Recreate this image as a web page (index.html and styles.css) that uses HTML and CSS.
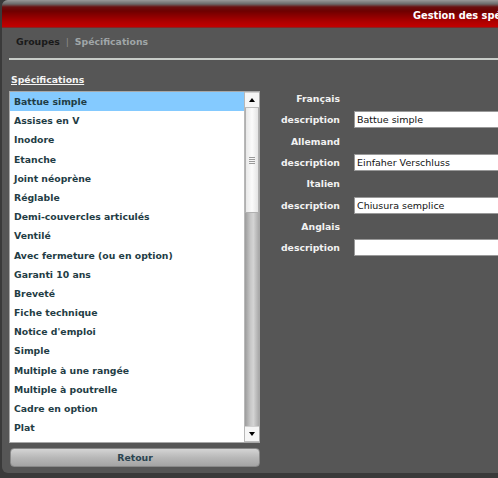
FILE: index.html
```html
<!DOCTYPE html>
<html lang="fr">
<head>
<meta charset="utf-8">
<title>Gestion des spécifications</title>
<link rel="stylesheet" href="styles.css">
</head>
<body>
<div class="window">
  <div class="titlebar"><span class="title">Gestion des spé</span></div>
  <div class="nav">
    <span class="nav-active">Groupes</span>
    <span class="nav-sep">|</span>
    <span class="nav-link">Spécifications</span>
  </div>
  <div class="rule"></div>
  <div class="content">
    <div class="left">
      <div class="section-title">Spécifications</div>
      <div class="listbox">
        <ul class="items">
          <li class="selected">Battue simple</li>
          <li>Assises en V</li>
          <li>Inodore</li>
          <li>Etanche</li>
          <li>Joint néoprène</li>
          <li>Réglable</li>
          <li>Demi-couvercles articulés</li>
          <li>Ventilé</li>
          <li>Avec fermeture (ou en option)</li>
          <li>Garanti 10 ans</li>
          <li>Breveté</li>
          <li>Fiche technique</li>
          <li>Notice d'emploi</li>
          <li>Simple</li>
          <li>Multiple à une rangée</li>
          <li>Multiple à poutrelle</li>
          <li>Cadre en option</li>
          <li>Plat</li>
        </ul>
        <div class="scrollbar">
          <div class="sb-btn"><span class="tri-up"></span></div>
          <div class="sb-thumb"><span class="grip"></span></div>
          <div class="sb-track"></div>
          <div class="sb-btn"><span class="tri-down"></span></div>
        </div>
      </div>
      <button class="btn">Retour</button>
    </div>
    <div class="form">
      <div class="lang">Français</div><div></div>
      <div class="lbl">description</div><input class="field" value="Battue simple">
      <div class="lang">Allemand</div><div></div>
      <div class="lbl">description</div><input class="field" value="Einfaher Verschluss">
      <div class="lang">Italien</div><div></div>
      <div class="lbl">description</div><input class="field" value="Chiusura semplice">
      <div class="lang">Anglais</div><div></div>
      <div class="lbl">description</div><input class="field" value="">
    </div>
  </div>
</div>
</body>
</html>
```

FILE: styles.css
```css
html, body {
  margin: 0;
  padding: 0;
  background: #3a3a3a;
  overflow: hidden;
}
body {
  width: 498px;
  height: 478px;
  font-family: "DejaVu Sans", Verdana, sans-serif;
  font-weight: bold;
  font-size: 9.3px;
}
.window {
  margin-left: 2px;
  height: 473px;
  background: #565656;
  border-radius: 6px 0 0 6px;
  overflow: hidden;
}
.titlebar {
  height: 28px;
  background: linear-gradient(to bottom, #9a9a9a 0px, #6a6a6a 4px, #6a1010 7px, #6e0000 11px, #b00000 22px, #c20000 27px, #4a4a4a 28px);
  display: flex;
  align-items: center;
  padding-left: 411px;
  white-space: nowrap;
  overflow: hidden;
}
.title {
  color: #fff;
  font-size: 9.8px;
  padding-top: 3px;
}
.nav {
  height: 26px;
  display: flex;
  align-items: center;
  padding-left: 14px;
  gap: 6px;
}
.nav-active { color: #1a1a1a; }
.nav-sep { color: #8c8c8c; font-weight: normal; }
.nav-link { color: #a0a6a8; }
.rule {
  margin: 4px 0 0 7px;
  height: 2px;
  background: #c8ccc8;
}
.content {
  display: flex;
  padding: 13px 0 0 7px;
}
.left {
  width: 251px;
  display: flex;
  flex-direction: column;
}
.section-title {
  color: #f4f4f4;
  text-decoration: underline;
  margin-left: 2px;
  height: 18px;
  line-height: 14px;
}
.listbox {
  height: 350px;
  background: #fff;
  border: 1px solid #a8a8a8;
  display: flex;
}
.items {
  list-style: none;
  margin: 0;
  padding: 0;
  flex: 1;
}
.items li {
  height: 19.2px;
  line-height: 19.2px;
  padding-left: 4px;
  color: #1f3d45;
  white-space: nowrap;
}
.items li.selected {
  background: #84caff;
}
.scrollbar {
  width: 14px;
  border-left: 1px solid #b8b8b8;
  display: flex;
  flex-direction: column;
}
.sb-btn {
  height: 14px;
  background: #f6f6f6;
  border-top: 1px solid #d0d0d0;
  border-bottom: 1px solid #bdbdbd;
  display: flex;
  align-items: center;
  justify-content: center;
}
.tri-up {
  width: 0; height: 0;
  border-left: 3px solid transparent;
  border-right: 3px solid transparent;
  border-bottom: 4px solid #000;
}
.tri-down {
  width: 0; height: 0;
  border-left: 3px solid transparent;
  border-right: 3px solid transparent;
  border-top: 4px solid #000;
}
.sb-thumb {
  height: 104px;
  background: linear-gradient(to right, #e8e8e8, #fbfbfb 50%, #e4e4e4);
  border-left: 1px solid #b0b0b0;
  border-right: 1px solid #b0b0b0;
  border-bottom: 1px solid #b0b0b0;
  display: flex;
  align-items: center;
  justify-content: center;
}
.grip {
  width: 6px;
  height: 7px;
  background: repeating-linear-gradient(to bottom, #9a9a9a 0 1px, transparent 1px 2px);
}
.sb-track {
  flex: 1;
  background: linear-gradient(to right, #9c9c9c, #c8c8c8 40%, #d4d4d4 60%, #a8a8a8);
}
.btn {
  margin-top: 5px;
  height: 19px;
  width: 250px;
  margin-left: 1px;
  border: 1px solid #888;
  border-radius: 4px;
  background: linear-gradient(to bottom, #d4d4d4, #b8b8b8 50%, #a4a4a4);
  color: #2a4450;
  font-family: "DejaVu Sans", Verdana, sans-serif;
  font-weight: bold;
  font-size: 9.3px;
  padding: 0;
}
.form {
  display: grid;
  grid-template-columns: 80px 1fr;
  column-gap: 14px;
  grid-auto-rows: 21.3px;
  align-items: center;
  padding-top: 15px;
  flex: 1;
}
.lang, .lbl {
  text-align: right;
  color: #f2f2f2;
  white-space: nowrap;
}
.field {
  height: 17px;
  box-sizing: border-box;
  width: 160px;
  border: 1px solid #999;
  background: #fff;
  font-family: "DejaVu Sans", Verdana, sans-serif;
  font-weight: normal;
  font-size: 9.5px;
  color: #111;
  padding: 0 2px;
  margin: 0;
}
```
